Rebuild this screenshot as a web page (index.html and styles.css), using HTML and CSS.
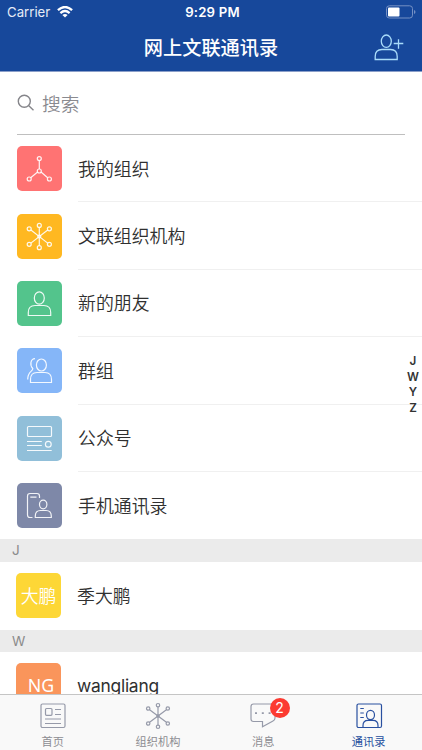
FILE: index.html
```html
<!DOCTYPE html>
<html lang="zh-CN">
<head>
<meta charset="utf-8">
<title>网上文联通讯录</title>
<link rel="stylesheet" href="styles.css">
</head>
<body>
<div class="app">
  <header class="top">
    <div class="status">
      <div class="carrier"><span>Carrier</span>
        <svg width="16" height="12" viewBox="0 0 16 12" fill="none" stroke="#fff" stroke-width="2.3"><path d="M.9 4.200Q8-2.200 15.100 4.200M3.400 7.100Q8 3 12.600 7.100"/><path d="M5.400 9Q8 6.900 10.600 9L8 11.600Z" fill="#fff" stroke="none"/></svg>
      </div>
      <span class="time">9:29 PM</span>
      <svg class="battery" width="30" height="14" viewBox="0 0 30 14"><rect x=".5" y=".8" width="26" height="12.2" rx="2.800" fill="none" stroke="#7590c4"/><rect x="2" y="2.400" width="11.500" height="9" rx="1" fill="#fff"/><path d="M28 5v4q1.500-.5 1.500-2T28 5Z" fill="#7590c4"/></svg>
    </div>
    <div class="nav">
      <h1>网上文联通讯录</h1>
      <svg class="add" width="30" height="27" viewBox="0 0 30 27"><ellipse cx="12.300" cy="7.200" rx="5" ry="6.200"/><path d="M1.200 25.500V22.500Q1.200 15.500 8 15.500H16.500Q23.200 15.500 23.200 22.500V25.500ZM24.500 5.200V14.800M19.700 9.500H29.300"/></svg>
    </div>
  </header>
  <main class="content">
    <div class="search">
      <svg width="18" height="18" viewBox="0 0 18 18"><circle cx="7.300" cy="7.300" r="6"/><path d="M11.800 11.800L16.500 16.300"/></svg>
      <span>搜索</span>
    </div>
    <ul class="menu">
      <li><span class="tile red"><svg viewBox="0 0 45 45"><path d="M22.300 14.600V23M20.600 26L13.700 31.700M24 26L30.700 31.700"/><circle cx="22.300" cy="12.600" r="2"/><circle cx="22.300" cy="25" r="2"/><circle cx="12.200" cy="33" r="2"/><circle cx="32.400" cy="33" r="2"/></svg></span><span class="label"><span>我的组织</span></span></li>
      <li><span class="tile orange"><svg viewBox="0 0 45 45"><path d="M22.300 13.300V31.700M13.900 16L30.700 29.100M30.700 16L13.900 29.100"/><circle cx="22.300" cy="11.400" r="2"/><circle cx="22.300" cy="33.700" r="2"/><circle cx="12.200" cy="14.800" r="2"/><circle cx="32.400" cy="14.800" r="2"/><circle cx="12.200" cy="30.300" r="2"/><circle cx="32.400" cy="30.300" r="2"/><circle cx="22.300" cy="22.500" r="1.500"/></svg></span><span class="label"><span>文联组织机构</span></span></li>
      <li><span class="tile green"><svg viewBox="0 0 45 45"><ellipse cx="22.300" cy="17" rx="5" ry="6.200"/><path d="M11.300 34.500V31.500Q11.300 24.500 18 24.500H26.800Q33.700 24.500 33.700 31.500V34.500Z"/></svg></span><span class="label"><span>新的朋友</span></span></li>
      <li><span class="tile blue"><svg viewBox="0 0 45 45"><ellipse cx="24.400" cy="17" rx="5" ry="6"/><path d="M13.500 34.500V31.500Q13.500 24.500 20 24.500H28Q34.500 24.500 34.500 31.500V34.500ZM18 10.600C13.500 10.800 12.500 17 15.800 20.500C16 23.500 10.700 23 10.700 31.500"/></svg></span><span class="label"><span>群组</span></span></li>
      <li><span class="tile cyan"><svg viewBox="0 0 45 45"><rect x="10.500" y="10.500" width="24" height="10" rx="1"/><path d="M10 25.500H24.800M10 29.500H24.800M10 34.500H34.700"/><circle cx="31.300" cy="28.300" r="2.900"/></svg></span><span class="label"><span>公众号</span></span></li>
      <li><span class="tile purple"><svg viewBox="0 0 45 45"><path d="M15.500 34.500H13Q10.500 34.500 10.500 32V13Q10.500 10.500 13 10.500H20Q22.500 10.500 22.500 13V15M13.300 14.200H19.500M18.300 34.500V33Q18.300 27.500 23.500 27.500H29Q34.300 27.500 34.300 33V34.500Z"/><ellipse cx="26.200" cy="21.500" rx="3.700" ry="4.300"/></svg></span><span class="label"><span>手机通讯录</span></span></li>
    </ul>
    <section>
      <h2>J</h2>
      <div class="person"><span class="tile yellow">大鹏</span><span class="label">季大鹏</span></div>
    </section>
    <section>
      <h2>W</h2>
      <div class="person"><span class="tile coral">NG</span><span class="label latin">wangliang</span></div>
    </section>
  </main>
  <nav class="tabs">
    <a class="tab"><svg viewBox="0 0 28 28"><rect x="2" y="2" width="24" height="23.500" rx="1.500"/><rect x="6.500" y="6.500" width="6.500" height="6.800" rx="1"/><path d="M16 7.500H22M16 12.500H22M6 17H22M6 21.500H22"/></svg><span>首页</span></a>
    <a class="tab"><svg viewBox="0 0 28 28"><path d="M14 5V23M5.600 7.700L22.400 20.300M22.400 7.700L5.600 20.300"/><circle cx="14" cy="3.200" r="1.700"/><circle cx="14" cy="24.800" r="1.700"/><circle cx="4.200" cy="6.500" r="1.700"/><circle cx="23.800" cy="6.500" r="1.700"/><circle cx="4.200" cy="21.500" r="1.700"/><circle cx="23.800" cy="21.500" r="1.700"/><circle cx="14" cy="14" r="1.200"/></svg><span>组织机构</span></a>
    <a class="tab"><svg viewBox="0 0 28 28"><path d="M4.500 2H23.500Q26 2 26 4.500V16Q26 18 24 19L13.500 24.800V19.500H4.500Q2 19.500 2 17V4.500Q2 2 4.500 2Z"/><path class="dots" d="M6 11.200H8M12.800 11.200H14.800M19.600 11.200H21.600"/></svg><span>消息</span><b class="badge">2</b></a>
    <a class="tab active"><svg viewBox="0 0 28 28"><rect x="2" y="2" width="24.500" height="23.500" rx="1.500"/><path d="M5.300 6.500H8.800M5.300 11H8.800M5.300 15.500H8.800M8 25.500V23.500Q8 18.300 13 18.300H18Q23 18.300 23 23.500V25.500"/><ellipse cx="15.500" cy="13" rx="4" ry="4.600"/></svg><span>通讯录</span></a>
  </nav>
  <div class="index"><span>J</span><span>W</span><span>Y</span><span>Z</span></div>
</div>
</body>
</html>
```
FILE: styles.css
```css
* { box-sizing: border-box; }
body { margin: 0; font-family: Inter, "Noto Sans CJK SC", sans-serif; color: #303030; background: #fff; }
svg { display: block; fill: none; flex: none; }
.app { position: relative; width: 422px; height: 750px; overflow: hidden; display: flex; flex-direction: column; }
.top { flex: none; height: 72px; background: #17489b; color: #fff; border-bottom: 1px solid #8b9fc9; }
.status { height: 24px; display: grid; grid-template-columns: 1fr auto 1fr; align-items: center; padding: 0 6px 0 7px; }
.carrier { display: flex; align-items: center; gap: 7px; font-size: 13.2px; color: #e6ecf7; }
.time { font-size: 13.2px; font-weight: 600; letter-spacing: .2px; transform: translateX(1px); }
.battery { justify-self: end; }
.nav { height: 47px; display: grid; grid-template-columns: 1fr auto 1fr; align-items: center; padding-right: 18px; }
.nav h1 { grid-column: 2; margin: 0; font-size: 19.2px; line-height: 28px; font-weight: 500; transform: translateX(9px); }
.add { justify-self: end; stroke: #a9dcfa; stroke-width: 1.3; }
.content { flex: 1; min-height: 0; overflow: hidden; }
.search { height: 63px; margin: 0 17px; border-bottom: 1px solid #bfbfbf; display: flex; align-items: center; gap: 7px; font-size: 18.700px; font-weight: 350; color: #8a8a8f; }
.search svg { stroke: #85858a; stroke-width: 1.4; }
.search span { padding-bottom: 2px; }
.menu { list-style: none; margin: 0; padding: 0; }
.menu li { height: 67.4px; display: flex; align-items: center; padding-left: 17px; gap: 16px; }
.label { font-size: 17.9px; font-weight: 350; padding-bottom: 1px; }
.menu .label { flex: 1; height: 100%; display: flex; align-items: center; border-bottom: 1px solid #f0f0f0; }
.menu li:last-child .label { border: 0; }
.label.latin { font-size: 17.4px; font-weight: 400; letter-spacing: -.25px; padding: 0; }
.tile { flex: none; width: 45px; height: 45px; border-radius: 5px; display: flex; align-items: center; justify-content: center; color: #fff; font-size: 17.800px; overflow: hidden; }
.tile svg { width: 45px; height: 45px; stroke: rgba(255,255,255,.9); stroke-width: 1.2; }
.red { background: #ff7373; }
.orange { background: #ffb821; }
.green { background: #53c48c; }
.blue { background: #85b6f8; }
.cyan { background: #91bfd9; }
.purple { background: #7e88a8; }
.yellow { background: #fdd736; font-weight: 350; padding-bottom: 2px; }
.coral { background: #fa955b; font-family: "Noto Sans", sans-serif; padding: 0 0 2px 5px; }
h2 { margin: 0; height: 22.300px; padding-left: 12px; background: #ebebeb; font-size: 13.500px; line-height: 22px; font-weight: 400; color: #8a8a8a; }
.person { height: 68px; display: flex; align-items: center; padding-left: 16px; gap: 16px; }
.tabs { flex: none; height: 56px; border-top: 1px solid #c5c5c5; background: #f9f9f9; display: grid; grid-template-columns: repeat(4, 105.300px); }
.tab { position: relative; display: flex; flex-direction: column; align-items: center; padding-top: 7px; font-size: 11.200px; line-height: 16px; color: #8d8d92; }
.tab svg { width: 28px; height: 28px; margin-bottom: 4px; stroke: #969aa9; stroke-width: 1.200; }
.tab .dots { stroke-width: 1.800; }
.active { color: #254f9e; }
.active svg { stroke: #2950a0; }
.badge { position: absolute; left: 59px; top: 3px; width: 20px; height: 20px; border-radius: 50%; background: #fc3a31; color: #fff; font-size: 14px; line-height: 20px; font-weight: 400; text-align: center; }
.index { position: absolute; right: 2px; top: 354px; width: 14px; display: flex; flex-direction: column; align-items: center; font-size: 11.700px; line-height: 15.700px; font-weight: 600; color: #333; }
```
